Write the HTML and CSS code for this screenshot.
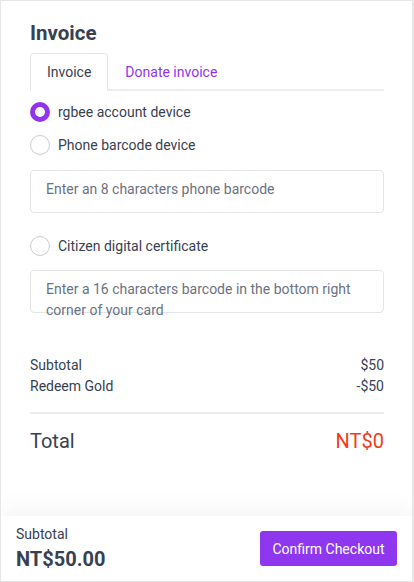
FILE: index.html
```html
<!DOCTYPE html>
<html lang="en">
<head>
<meta charset="utf-8">
<title>Invoice</title>
<link rel="stylesheet" href="styles.css">
</head>
<body>
<div class="page">
  <main class="content">
    <h1 class="title">Invoice</h1>
    <div class="tabs">
      <div class="tab active">Invoice</div>
      <div class="tab">Donate invoice</div>
    </div>
    <div class="options">
      <div class="option"><span class="radio checked"></span><span>rgbee account device</span></div>
      <div class="option"><span class="radio"></span><span>Phone barcode device</span></div>
      <div class="field field-first"><span class="placeholder">Enter an 8 characters phone barcode</span></div>
      <div class="option option-third"><span class="radio"></span><span>Citizen digital certificate</span></div>
      <div class="field field-second"><span class="placeholder">Enter a 16 characters barcode in the bottom right corner of your card</span></div>
    </div>
    <div class="summary">
      <div class="row"><span>Subtotal</span><span>$50</span></div>
      <div class="row"><span>Redeem Gold</span><span>-$50</span></div>
    </div>
    <div class="divider"></div>
    <div class="total"><span>Total</span><span class="total-value">NT$0</span></div>
  </main>
  <footer class="footer">
    <div class="footer-sum">
      <div class="footer-label">Subtotal</div>
      <div class="footer-amount">NT$50.00</div>
    </div>
    <button class="confirm">Confirm Checkout</button>
  </footer>
</div>
</body>
</html>
```
FILE: styles.css
```css
html, body {
  margin: 0;
  padding: 0;
  height: 100%;
}
body {
  font-family: Roboto, "Liberation Sans", sans-serif;
  color: #374151;
  background: #fff;
}
.page {
  box-sizing: border-box;
  height: 582px;
  border: 1px solid #e6e6e6;
  border-right-width: 2px;
  display: flex;
  flex-direction: column;
  overflow: hidden;
}
.content {
  flex: 1;
  padding: 18px 28px 0 29px;
}
.title {
  margin: 0;
  font-size: 20.5px;
  line-height: 28px;
  font-weight: 700;
  color: #374151;
}
.tabs {
  margin-top: 6px;
  display: flex;
  border-bottom: 2px solid #ebebf0;
  height: 36px;
}
.tab {
  box-sizing: border-box;
  padding: 0 16px;
  font-size: 14px;
  line-height: 36px;
  color: #9134ec;
  border: 1px solid transparent;
  border-bottom: none;
  border-radius: 4px 4px 0 0;
}
.tab.active {
  color: #374151;
  border-color: #e5e7eb;
  background: #fff;
  height: 38px;
  margin-bottom: -2px;
}
.options {
  margin-top: 4px;
  display: flex;
  flex-direction: column;
}
.option {
  display: flex;
  align-items: center;
  gap: 8px;
  height: 33px;
  font-size: 14px;
}
.option-third {
  margin-top: 16px;
}
.radio {
  box-sizing: border-box;
  width: 20px;
  height: 20px;
  border-radius: 50%;
  border: 1px solid #c9ccd2;
  background: #fff;
  flex: none;
}
.radio.checked {
  border: 5px solid #9134ec;
}
.field {
  box-sizing: border-box;
  height: 43px;
  border: 1px solid #e3e5e9;
  border-radius: 4px;
  padding: 8px 15px 0;
  font-size: 14px;
  line-height: 21px;
  color: #6b7280;
}
.field-first {
  margin-top: 9px;
}
.field-second {
  margin-top: 8px;
}
.summary {
  margin-top: 42px;
}
.row {
  display: flex;
  justify-content: space-between;
  font-size: 14px;
  line-height: 21px;
}
.divider {
  margin-top: 15px;
  height: 0;
  border-top: 2px solid #ededed;
}
.total {
  margin-top: 13px;
  display: flex;
  justify-content: space-between;
  font-size: 20px;
  line-height: 28px;
}
.total-value {
  color: #f43a1c;
}
.footer {
  height: 65px;
  flex: none;
  display: flex;
  align-items: center;
  justify-content: space-between;
  padding: 0 15px;
  background: #fff;
  box-shadow: 0 -8px 22px rgba(0, 0, 0, 0.045);
}
.footer-label {
  font-size: 14px;
  line-height: 21px;
}
.footer-amount {
  font-size: 20px;
  line-height: 28px;
  font-weight: 700;
}
.confirm {
  width: 137px;
  height: 35px;
  border: none;
  border-radius: 3px;
  background: #8e37ef;
  color: #fff;
  font-family: Roboto, "Liberation Sans", sans-serif;
  font-size: 14px;
  padding: 0;
  margin-right: 0;
}
```
